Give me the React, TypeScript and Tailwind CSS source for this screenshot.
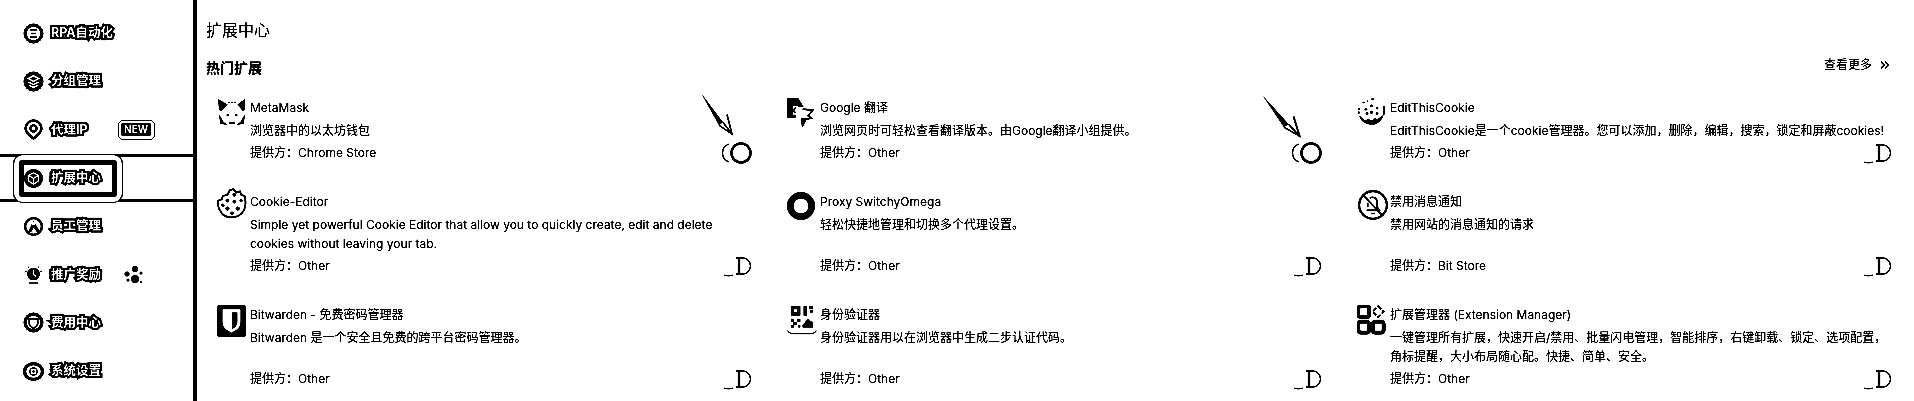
import React from 'react';
import { ChevronsRight } from 'lucide-react';

const Ring = ({ children }: { children: React.ReactNode }) => (
  <svg width="21" height="21" viewBox="0 0 20 20" className="shrink-0">{children}</svg>
);

const navIcons: Record<string, React.ReactNode> = {
  rpa: (
    <Ring>
      <circle cx="10" cy="10" r="8" fill="none" stroke="#000" strokeWidth="3" />
      <path d="M6.5 6.5h7M7.500 10h5M6.500 13.500h7" stroke="#000" strokeWidth="1.300" />
    </Ring>
  ),
  group: (
    <Ring>
      <circle cx="10" cy="10" r="9.500" fill="#000" />
      <path d="M10 4.500l5 2.700-5 2.700-5-2.700zM5 10.500l5 2.500 5-2.500M5.500 13.500l4.500 2 4.500-2" fill="none" stroke="#fff" strokeWidth="1.500" />
    </Ring>
  ),
  proxy: (
    <Ring>
      <path d="M10 18.500C5 15 2.500 12.500 2.500 9a7.500 7.500 0 0 1 15 0c0 3.500-2.500 6-7.500 9.500z" fill="none" stroke="#000" strokeWidth="2.400" />
      <circle cx="10" cy="9" r="3" fill="none" stroke="#000" strokeWidth="2" />
    </Ring>
  ),
  ext: (
    <Ring>
      <circle cx="10" cy="10" r="9" fill="#000" />
      <path d="M10 4.500l4.500 2.500v5.500L10 15.500l-4.500-3V7zM5.500 7l4.500 3 4.500-3M10 10v5" fill="none" stroke="#fff" strokeWidth="1.300" />
    </Ring>
  ),
  staff: (
    <Ring>
      <circle cx="10" cy="10" r="8" fill="none" stroke="#000" strokeWidth="2.200" />
      <path d="M10 4l-5 11h3l2-4 3 4h3z" fill="#000" />
      <circle cx="10" cy="7" r="1.800" fill="#fff" />
    </Ring>
  ),
  reward: (
    <Ring>
      <circle cx="10" cy="9.500" r="6" fill="#000" />
      <path d="M10 6v4l2.500 2" fill="none" stroke="#fff" strokeWidth="1.400" />
      <path d="M2 7h1.500M16.500 7H18M5.500 18h9M4.500 2.500l1 1M15.500 2.500l-1 1" stroke="#000" strokeWidth="1" />
    </Ring>
  ),
  fee: (
    <Ring>
      <circle cx="10" cy="10" r="8" fill="none" stroke="#000" strokeWidth="3" />
      <path d="M6 6.500h8V11c0 2-2 3.500-4 4.500C8 14.500 6 13 6 11z" fill="none" stroke="#000" strokeWidth="1.500" />
    </Ring>
  ),
  setting: (
    <Ring>
      <ellipse cx="10" cy="10" rx="8.500" ry="7.500" fill="none" stroke="#000" strokeWidth="3" />
      <circle cx="10" cy="10" r="3.500" fill="none" stroke="#000" strokeWidth="1.200" />
      <circle cx="10" cy="10" r="1.200" fill="#000" />
    </Ring>
  ),
};

const navLabelClass =
  'text-[12.5px] leading-[20px] font-bold text-white [-webkit-text-stroke:4px_#000] [paint-order:stroke_fill]';

const NavItem = ({ icon, label, children }: { icon: string; label: string; children?: React.ReactNode }) => (
  <div className="flex h-[48.3px] items-center pl-[23px]">
    <span className="flex w-[28px]">{navIcons[icon]}</span>
    <span className={navLabelClass}>{label}</span>
    {children}
  </div>
);

const Sidebar = () => (
  <aside className="h-[401px] w-[197px] shrink-0 border-r-[4px] border-black pt-[9px]">
    <NavItem icon="rpa" label="RPA自动化" />
    <NavItem icon="group" label="分组管理" />
    <NavItem icon="proxy" label="代理IP">
      <span className="ml-[30px] flex h-[20px] w-[37px] items-center justify-center rounded-[5px] border border-black">
        <span className="rounded-[2px] bg-black px-[3px] text-[10px] leading-[13px] font-bold text-white">NEW</span>
      </span>
    </NavItem>
    <div className="flex h-[48.3px] items-center border-y-[3px] border-black pl-[19px]">
      <div className="flex h-[37px] w-[98px] items-center rounded-[4px] border-[5px] border-black shadow-[0_0_0_5px_#fff,0_0_0_6px_#000]">
        <span className="-ml-[1px] flex w-[28px]">{navIcons.ext}</span>
        <span className={navLabelClass}>扩展中心</span>
      </div>
    </div>
    <NavItem icon="staff" label="员工管理" />
    <NavItem icon="reward" label="推广奖励">
      <svg width="20" height="20" viewBox="0 0 20 20" className="ml-[22px]">
        <circle cx="12" cy="4" r="3" />
        <circle cx="4" cy="9" r="2.500" />
        <circle cx="12" cy="14" r="4" />
        <circle cx="5" cy="15" r="1.500" />
        <circle cx="18" cy="8" r="1.500" />
        <circle cx="18" cy="17" r="1.200" />
      </svg>
    </NavItem>
    <NavItem icon="fee" label="费用中心" />
    <NavItem icon="setting" label="系统设置" />
  </aside>
);

const cardIcons: Record<string, React.ReactNode> = {
  fox: (
    <svg width="30" height="28" viewBox="0 0 26 26">
      <path d="M0 1l9 5-6 6-2-1zM25 1l-7 5 5 6 2-1z" fill="#000" />
      <path d="M9 4h8" stroke="#000" strokeWidth="1" strokeDasharray="2 1" />
      <path d="M1 15l1 9 7 1-4-3zM25 15l-1 9-7 1 4-3zM10 22h6v2h-6zM8 15h2v2H8zM16 15h2v2h-2z" fill="#000" />
    </svg>
  ),
  translate: (
    <svg width="29" height="29" viewBox="0 0 26 26">
      <path d="M0 0h10l5 8h-7v10H0z" fill="#000" />
      <path d="M5 7h5v8H5z" fill="#fff" />
      <path d="M8 9a2 2 0 1 0 0 4" fill="none" stroke="#000" strokeWidth="1.200" />
      <path d="M14 10l9 1-4 5 3 2-5 1-3 6-1-7" fill="none" stroke="#000" strokeWidth="1.500" />
      <path d="M13 18h5l-3 6z" fill="#000" />
    </svg>
  ),
  cookieDots: (
    <svg width="29" height="29" viewBox="0 0 26 26">
      <path d="M2 9a11 11 0 0 0 0 6M13 1h2M5 4h2M9 3h1" fill="none" stroke="#000" strokeWidth="1.500" strokeDasharray="2 1" />
      <path d="M2 16c1 5 6 8 11 8s9-3 11-9l-3 2-3 2-2-1-2 2-4-1-3 1-3-3z" fill="#000" />
      <path d="M24 7v8" stroke="#000" strokeWidth="1.500" />
      <circle cx="8" cy="10" r="1.200" /><circle cx="13" cy="7" r="1.200" /><circle cx="18" cy="9" r="1.200" />
      <circle cx="13" cy="13" r="1.300" /><circle cx="9" cy="14" r="1.200" /><circle cx="18" cy="14" r="1.200" />
    </svg>
  ),
  cookie: (
    <svg width="30" height="32" viewBox="0 0 26 28" className="-mt-[4px]">
      <path d="M14 1l3 3 3-1 1 3 3 1c2 8 0 14-5 17-5 3-12 2-15-2C1 18 0 14 1 11l3-1 1-3 4-1 2-4z" fill="none" stroke="#000" strokeWidth="1.500" />
      <circle cx="15" cy="6" r="1.600" /><circle cx="9" cy="11" r="1.600" /><circle cx="15" cy="12" r="1.600" /><circle cx="21" cy="11" r="1.400" />
      <circle cx="9" cy="18" r="1.800" /><circle cx="5" cy="15" r="1.400" /><circle cx="18" cy="18" r="1.800" /><circle cx="13" cy="22" r="1.500" />
    </svg>
  ),
  omega: (
    <svg width="28" height="28" viewBox="0 0 26 26">
      <circle cx="13" cy="13" r="10" fill="none" stroke="#000" strokeWidth="6" />
    </svg>
  ),
  bell: (
    <svg width="32" height="32" viewBox="0 0 30 30" className="-mt-[3px]">
      <circle cx="15" cy="15" r="13" fill="none" stroke="#000" strokeWidth="2" />
      <path d="M6 6l18 19M9 20h12l-2-3v-5a4.500 4.500 0 0 0-7-3.500M10 13v4zM13 23h4" fill="none" stroke="#000" strokeWidth="1.500" />
    </svg>
  ),
  bitwarden: (
    <svg width="29" height="32" viewBox="0 0 27 30">
      <rect x="0" y="0" width="27" height="30" rx="3" fill="#000" />
      <path d="M5 4h17v12c0 5-4 8-8.500 10C9 24 5 21 5 16z" fill="#fff" />
      <path d="M14 7h5v9c0 3-2 5-5 7z" fill="#000" />
    </svg>
  ),
  qr: (
    <svg width="31" height="32" viewBox="0 0 28 30">
      <path d="M3 1h9v9H3zM15 1h3v9h-3zM20 1h4v3h-4zM21 5h3v2h-3z" fill="#000" />
      <path d="M6 4h3v3H6z" fill="#fff" />
      <path d="M3 13h3v3H3zM9 13h3v3H9zM5 16h4v3H5zM3 19h3v2H3zM10 19h2v2h-2z" fill="#000" />
      <path d="M14 19l5-6 2 2 3 1v5H14z" fill="#000" />
      <path d="M0 24c1 2 3 3 6 3h15c3 0 5-1 6-3" fill="none" stroke="#000" strokeWidth="1" />
    </svg>
  ),
  manager: (
    <svg width="29" height="31" viewBox="0 0 26 28">
      <rect x="1" y="1" width="10" height="10" rx="2.500" fill="none" stroke="#000" strokeWidth="3.500" />
      <path d="M19 1l5 5-5 5-5-5z" fill="none" stroke="#000" strokeWidth="1.500" strokeDasharray="4 1.500" />
      <rect x="1" y="15" width="10" height="10" rx="2.500" fill="none" stroke="#000" strokeWidth="3.500" />
      <rect x="14" y="15" width="10" height="10" rx="2.500" fill="none" stroke="#000" strokeWidth="3.500" />
    </svg>
  ),
};

const ToggleOff = () => (
  <svg width="29" height="24" viewBox="0 0 29 24" className="-my-[2px] shrink-0">
    <path d="M1 21c2 1.200 7 1.200 9 0" fill="none" stroke="#000" strokeWidth="1" />
    <path d="M13 4h7a7.500 8 0 0 1 0 16h-7" fill="none" stroke="#000" strokeWidth="1.300" />
    <path d="M16 4v16" stroke="#000" strokeWidth="2.500" />
  </svg>
);

const ToggleOn = () => (
  <svg width="32" height="24" viewBox="0 0 32 24" className="-my-[2px] shrink-0">
    <path d="M9 3a9.500 9.500 0 0 0 0 18" fill="none" stroke="#000" strokeWidth="1.300" />
    <circle cx="21" cy="12" r="9.500" fill="none" stroke="#000" strokeWidth="2.500" />
  </svg>
);

// hand drawn annotation sitting over the toggle
const Arrow = ({ className }: { className: string }) => (
  <svg viewBox="0 0 34 46" preserveAspectRatio="none" className={`absolute ${className}`}>
    <path d="M1 1l22 30-4 3z" fill="#000" />
    <path d="M19 34l13 9-5-20" fill="none" stroke="#000" strokeWidth="1.500" />
    <path d="M23 31l9 12" stroke="#000" strokeWidth="1.500" />
  </svg>
);

const extensions = [
  { icon: 'fox', name: 'MetaMask', desc: '浏览器中的以太坊钱包', from: 'Chrome Store', on: true, arrow: 'top-[-6px] right-[18px] h-[45px] w-[34px]' },
  { icon: 'translate', name: 'Google 翻译', desc: '浏览网页时可轻松查看翻译版本。由Google翻译小组提供。', from: 'Other', on: true, arrow: 'top-[-4px] right-[20px] h-[45px] w-[41px]' },
  { icon: 'cookieDots', name: 'EditThisCookie', desc: 'EditThisCookie是一个cookie管理器。您可以添加，删除，编辑，搜索，锁定和屏蔽cookies!', from: 'Other' },
  { icon: 'cookie', name: 'Cookie-Editor', desc: 'Simple yet powerful Cookie Editor that allow you to quickly create, edit and delete cookies without leaving your tab.', from: 'Other' },
  { icon: 'omega', name: 'Proxy SwitchyOmega', desc: '轻松快捷地管理和切换多个代理设置。', from: 'Other' },
  { icon: 'bell', name: '禁用消息通知', desc: '禁用网站的消息通知的请求', from: 'Bit Store' },
  { icon: 'bitwarden', name: 'Bitwarden - 免费密码管理器', desc: 'Bitwarden 是一个安全且免费的跨平台密码管理器。', from: 'Other' },
  { icon: 'qr', name: '身份验证器', desc: '身份验证器用以在浏览器中生成二步认证代码。', from: 'Other' },
  { icon: 'manager', name: '扩展管理器 (Extension Manager)', desc: '一键管理所有扩展，快速开启/禁用、批量闪电管理，智能排序，右键卸载、锁定、选项配置，角标提醒，大小布局随心配。快捷、简单、安全。', from: 'Other' },
];

const ExtensionCard = ({ icon, name, desc, from, on, arrow }: { icon: string; name: string; desc: string; from: string; on?: boolean; arrow?: string }) => (
  <div className="relative flex">
    <div className="w-[33px] shrink-0">{cardIcons[icon]}</div>
    <div className="flex min-w-0 flex-1 flex-col text-[12px]">
      <div className="leading-[20px]">{name}</div>
      <div className="mt-[3px] leading-[19px]">{desc}</div>
      <div className="mt-auto flex items-center justify-between pt-[3px] leading-[20px]">
        <span>提供方：{from}</span>
        {on ? <ToggleOn /> : <ToggleOff />}
      </div>
    </div>
    {arrow && <Arrow className={arrow} />}
  </div>
);

const App = () => (
  <div className="flex h-[401px] w-[1914px] overflow-hidden bg-white font-['Inter','Noto_Sans_CJK_SC',sans-serif] text-black brightness-[0.8] contrast-[400%] grayscale">
    <Sidebar />
    <main className="flex-1 pt-[20px] pr-[22px] pl-[9px]">
      <h1 className="text-[16px] leading-[20px] font-normal">扩展中心</h1>
      <div className="mt-[18px] flex items-start justify-between">
        <h2 className="text-[14px] leading-[20px] font-bold">热门扩展</h2>
        <a className="flex items-center gap-[6px] text-[12px] leading-[14px]">
          查看更多
          <ChevronsRight size={14} strokeWidth={3} />
        </a>
      </div>
      <div className="mt-[20px] ml-[11px] grid grid-cols-[535px_535px_535px] gap-x-[35px] gap-y-[29px]">
        {extensions.map((ext) => (
          <ExtensionCard key={ext.name} {...ext} />
        ))}
      </div>
    </main>
  </div>
);

export default App;
